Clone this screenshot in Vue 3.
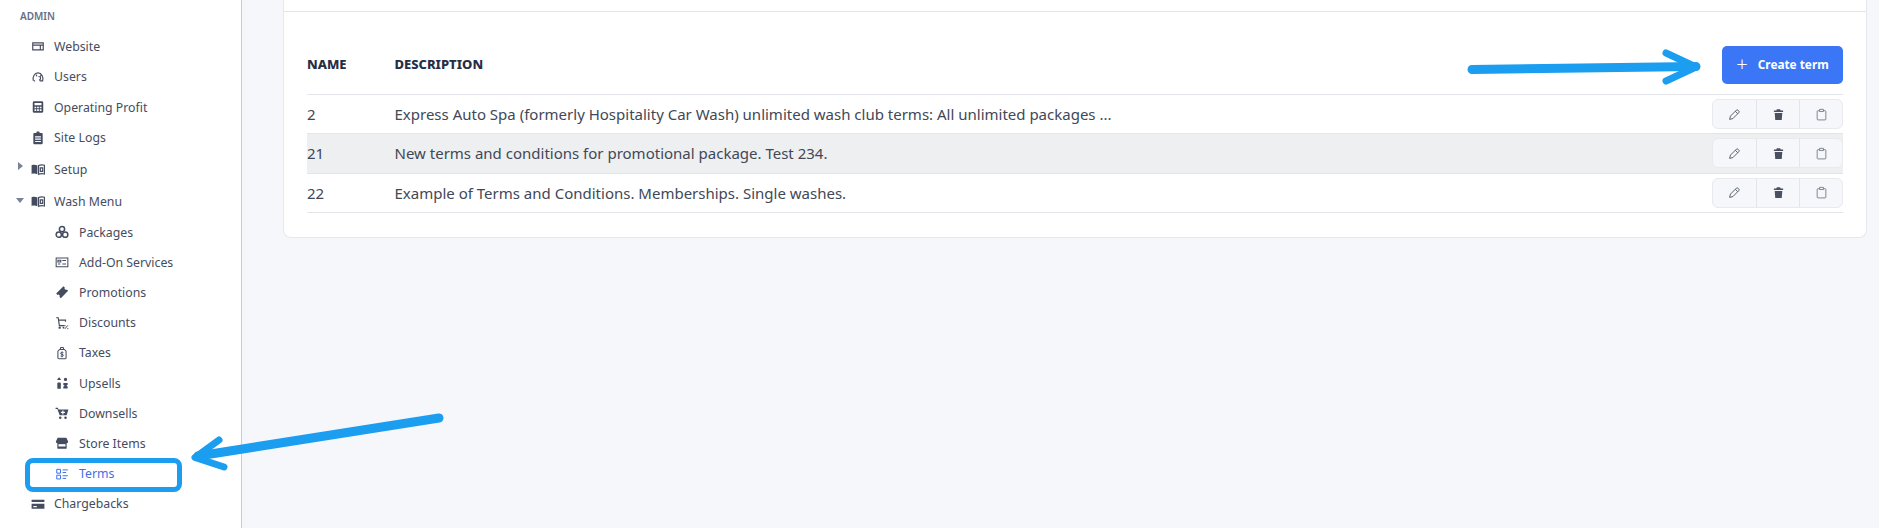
<template>
  <div class="page">
    <aside class="sidebar">
      <div class="section-title">ADMIN</div>
      <div
        v-for="item in menu"
        :key="item.label"
        class="menu-item"
        :class="{ sub: item.sub, active: item.active, parent: item.caret }"
      >
        <span v-if="!item.sub" class="caret" :class="item.caret"></span>
        <svg class="icon" viewBox="0 0 24 24" v-html="icons[item.icon]"></svg>
        <span>{{ item.label }}</span>
      </div>
    </aside>

    <main class="main">
      <section class="card">
        <div class="card-top"></div>
        <div class="card-body">
          <div class="table-head">
            <div class="col-name head">NAME</div>
            <div class="col-desc head">DESCRIPTION</div>
            <button class="create-btn"><span class="plus">+</span>Create term</button>
          </div>
          <div v-for="row in rows" :key="row.name" class="row" :class="{ hover: row.hover }">
            <div class="col-name">{{ row.name }}</div>
            <div class="col-desc">{{ row.desc }}</div>
            <div class="actions">
              <div class="action">
                <svg viewBox="0 0 24 24" fill="none" stroke="#4d5463" stroke-width="1.700" stroke-linejoin="round"><path d="M3 21l1.500-6L15.500 4a2 2 0 0 1 2.800 0l1.700 1.700a2 2 0 0 1 0 2.800L9 19.500z"/><path d="M13.500 6l4.500 4.500"/></svg>
              </div>
              <div class="action">
                <svg viewBox="0 0 24 24" fill="#4a5060"><path d="M9 2.500h6l1 2h4.500v2.700h-17V4.500H8zM5 9h14l-1 13H6z"/></svg>
              </div>
              <div class="action">
                <svg viewBox="0 0 24 24" fill="none" stroke="#5f6675" stroke-width="1.400"><path d="M8.500 5H5.500A1.500 1.500 0 0 0 4 6.500v14A1.500 1.500 0 0 0 5.500 22h13a1.500 1.500 0 0 0 1.500-1.500v-14A1.500 1.500 0 0 0 18.500 5h-3"/><path d="M8.500 2.500h7v4h-7z"/></svg>
              </div>
            </div>
          </div>
        </div>
      </section>
    </main>

    <!-- annotations drawn on top of the screenshot -->
    <div class="highlight"></div>
    <svg class="arrows" viewBox="0 0 1879 528" fill="none" stroke="#1b9df0" stroke-linecap="round" stroke-linejoin="round">
      <path d="M1472 69.500L1696 66.500" stroke-width="9"/>
      <path d="M1666 53L1696 67L1666 81" stroke-width="7"/>
      <path d="M439 418L198 456" stroke-width="9"/>
      <path d="M219 440L195 457.500L224 467" stroke-width="7"/>
    </svg>
  </div>
</template>

<script setup>
const icons = {
  website: '<path fill="none" stroke="currentColor" stroke-width="2" d="M3 6.500h18v12H3zM3 10.500h18M16 10.500v8"/>',
  users: '<path fill="none" stroke="currentColor" stroke-width="2" d="M4 18.500C2 12 6 5 12 5s10 7 8 13.500h-5M7 18.500H5M9 8l1 3M15 5.500c3 0 3 5 0 6 2 .5 2 5-1 6"/>',
  calc: '<path fill="currentColor" fill-rule="evenodd" d="M5.500 2h13A2.500 2.500 0 0 1 21 4.500v15a2.500 2.500 0 0 1-2.500 2.500h-13A2.500 2.500 0 0 1 3 19.500v-15A2.500 2.500 0 0 1 5.500 2zM6 5v4h12V5zM6 11.500v2.500h3v-2.500zM10.500 11.500v2.500h3v-2.500zM15 11.500v2.500h3v-2.500zM6 16v3h3v-3zM10.500 16v3h3v-3zM15 16v3h3v-3z"/>',
  logs: '<path fill="currentColor" fill-rule="evenodd" d="M9 3.500a3 3 0 0 1 6 0h3.500A1.500 1.500 0 0 1 20 5v16a1.500 1.500 0 0 1-1.500 1.500h-13A1.500 1.500 0 0 1 4 21V5a1.500 1.500 0 0 1 1.500-1.500zM7 9v2h10V9zM7 13v2h10v-2zM7 17v2h10v-2z"/>',
  book: '<path fill="currentColor" d="M1 5.500c3.500-1 7-.8 10 .5v15c-3-1.300-6.500-1.500-10-.5z"/><path fill="none" stroke="currentColor" stroke-width="2" d="M13 6c3-1.300 6.500-1.500 10-.5V20.500c-3.500-1-7-.8-10 .5zM16 10h4v6h-4z"/>',
  packages: '<g fill="none" stroke="currentColor" stroke-width="2.600"><circle cx="12" cy="7" r="4.500"/><circle cx="6.500" cy="16.500" r="4.500"/><circle cx="17.500" cy="16.500" r="4.500"/></g>',
  addon: '<path fill="none" stroke="currentColor" stroke-width="1.800" d="M2 5h20v15H2zM5 9h5v3H5zM5 15.500h4M12.500 9.500H19M12.500 15.500H19"/>',
  promo: '<path fill="currentColor" d="M14.500 2l2.500 2.500a2 2 0 0 0 3 3L22.500 10 10 22.500 7.500 20a2 2 0 0 0-3-3L2 14.500z"/>',
  discount: '<path fill="none" stroke="currentColor" stroke-width="2" d="M2 3h3.500l2 13.500H16M6 7h12v3"/><circle cx="8" cy="20" r="2" fill="currentColor"/><circle cx="14.500" cy="20" r="1.600" fill="currentColor"/><path fill="none" stroke="currentColor" stroke-width="1.700" d="M17 22l5-6"/><circle cx="17" cy="16.500" r="1.100" fill="currentColor"/><circle cx="22" cy="21.500" r="1.100" fill="currentColor"/>',
  taxes: '<path fill="none" stroke="currentColor" stroke-width="1.800" d="M8 6h8l3 3v11a2 2 0 0 1-2 2H7a2 2 0 0 1-2-2V9zM9 6l1-3.500h4L15 6"/><path fill="none" stroke="currentColor" stroke-width="1.600" d="M14.500 11.500c-1-1.200-5-1-5 1 0 2.500 5 1.200 5 3.500 0 2-4 2.300-5 1M12 9.500v10"/>',
  upsells: '<path fill="currentColor" d="M4 12.500A1.500 1.500 0 0 1 5.500 11h3a1.500 1.500 0 0 1 1.500 1.500V22H4zM7 2l3 3.500v1.500H4V5.500zM18 3a2.800 2.800 0 1 1 0 5.600A2.800 2.800 0 0 1 18 3zM14.500 12h7l.5 2.500-2.500 2 2.500 2-.5 3h-7l-.5-3 2.500-2-2.500-2z"/>',
  downsells: '<path fill="currentColor" fill-rule="evenodd" d="M1 3h4l1 3h17l-3 10H8L4 5H1zM12.500 7.500v2.500H10v2h2.500v2.500h2V12H17v-2h-2.500V7.500z"/><circle cx="9" cy="20" r="2.200" fill="currentColor"/><circle cx="18" cy="20" r="2.200" fill="currentColor"/>',
  store: '<path fill="currentColor" d="M4.500 3h15L22.500 9.500c0 1.800-1 3-2.500 3v8A1.500 1.500 0 0 1 18.500 22h-13A1.500 1.500 0 0 1 4 20.500v-8c-1.500 0-2.500-1.200-2.500-3z"/><path fill="#fff" d="M6 14h12v4H6z"/>',
  terms: '<path fill="none" stroke="currentColor" stroke-width="1.700" d="M3 4h6.500v6.500H3zM3 14h6.500v6.500H3zM13 5h9M13 9.500h6M13 15h9M13 19.500h6"/>',
  card: '<path fill="currentColor" d="M1 4.500h22v4H1zM1 11.500h22v8.500H1z"/><path fill="#fff" d="M4 15.500h6v2H4z"/>'
}

const menu = [
  { label: 'Website', icon: 'website' },
  { label: 'Users', icon: 'users' },
  { label: 'Operating Profit', icon: 'calc' },
  { label: 'Site Logs', icon: 'logs' },
  { label: 'Setup', icon: 'book', caret: 'right' },
  { label: 'Wash Menu', icon: 'book', caret: 'down' },
  { label: 'Packages', icon: 'packages', sub: true },
  { label: 'Add-On Services', icon: 'addon', sub: true },
  { label: 'Promotions', icon: 'promo', sub: true },
  { label: 'Discounts', icon: 'discount', sub: true },
  { label: 'Taxes', icon: 'taxes', sub: true },
  { label: 'Upsells', icon: 'upsells', sub: true },
  { label: 'Downsells', icon: 'downsells', sub: true },
  { label: 'Store Items', icon: 'store', sub: true },
  { label: 'Terms', icon: 'terms', sub: true, active: true },
  { label: 'Chargebacks', icon: 'card' }
]

const rows = [
  { name: '2', desc: 'Express Auto Spa (formerly Hospitality Car Wash) unlimited wash club terms: All unlimited packages ...' },
  { name: '21', desc: 'New terms and conditions for promotional package. Test 234.', hover: true },
  { name: '22', desc: 'Example of Terms and Conditions. Memberships. Single washes.' }
]
</script>

<style>
html,
body {
  margin: 0;
  overflow: hidden;
}
</style>

<style scoped>
.page {
  position: relative;
  display: flex;
  height: 528px;
  overflow: hidden;
  background: #f5f7fb;
  font-family: "Noto Sans", "Open Sans", sans-serif;
  color: #3f4759;
}
.sidebar {
  flex-shrink: 0;
  width: 242px;
  height: 100%;
  box-sizing: border-box;
  padding-top: 8px;
  background: #fff;
  border-right: 1px solid #c9ccd6;
}
.section-title {
  margin-left: 20px;
  margin-bottom: 7px;
  font-size: 10px;
  line-height: 16px;
  font-weight: 600;
  color: #666f88;
}
.menu-item {
  display: flex;
  align-items: center;
  height: 30.500px;
  padding-left: 17px;
  font-size: 12.300px;
  color: #454c60;
  white-space: nowrap;
}
.menu-item.parent {
  height: 32px;
}
.menu-item.sub {
  height: 30.200px;
  padding-left: 55px;
}
.caret {
  flex-shrink: 0;
  width: 14px;
  height: 0;
  position: relative;
}
.caret.right::before {
  content: "";
  position: absolute;
  left: 1px;
  top: -7px;
  border-left: 5px solid #7a8296;
  border-top: 4px solid transparent;
  border-bottom: 4px solid transparent;
}
.caret.down::before {
  content: "";
  position: absolute;
  left: -1px;
  top: -3px;
  border-top: 5px solid #7a8296;
  border-left: 4px solid transparent;
  border-right: 4px solid transparent;
}
.icon {
  flex-shrink: 0;
  width: 14px;
  height: 14px;
  margin-right: 9px;
  color: #454c60;
}
.menu-item.sub .icon {
  margin-right: 10px;
}
.menu-item.active,
.menu-item.active .icon {
  color: #3f6fe8;
}
.main {
  flex: 1;
  min-width: 0;
  padding-right: 12px;
  padding-left: 41px;
}
.card {
  height: 238px;
  box-sizing: border-box;
  background: #fff;
  border: 1px solid #e6e8ed;
  border-top: none;
  border-radius: 0 0 8px 8px;
}
.card-top {
  height: 11px;
  border-bottom: 1px solid #e3e5ea;
}
.card-body {
  padding: 0 23px;
}
.table-head {
  display: flex;
  align-items: center;
  height: 83px;
  padding-top: 23px;
  box-sizing: border-box;
  border-bottom: 1px solid #e3e5ea;
}
.col-name {
  flex-shrink: 0;
  width: 87.500px;
}
.col-desc {
  flex: 1;
  min-width: 0;
}
.head {
  margin-bottom: 2px;
  font-size: 13px;
  font-weight: 800;
  color: #262d45;
}
.create-btn {
  display: flex;
  align-items: center;
  justify-content: center;
  width: 121px;
  height: 38px;
  padding: 0 0 2px;
  border: none;
  border-radius: 5px;
  background: #3b76f6;
  color: #fff;
  font-family: inherit;
  font-size: 11.800px;
  font-weight: 700;
}
.plus {
  margin-right: 10px;
  font-size: 20px;
  font-weight: 300;
  line-height: 1;
}
.row {
  display: flex;
  align-items: center;
  height: 39.330px;
  box-sizing: border-box;
  border-bottom: 1px solid #e3e5ea;
  font-size: 15px;
  color: #414856;
}
.row.hover {
  background: #eeeff1;
}
.actions {
  display: flex;
  flex-shrink: 0;
  height: 30px;
  box-sizing: border-box;
  background: #f5f7fa;
  border: 1px solid #e8eaef;
  border-radius: 6px;
}
.action {
  display: flex;
  align-items: center;
  justify-content: center;
  box-sizing: border-box;
  width: 43px;
  border-left: 1px solid #e3e5ea;
}
.action:first-child {
  border-left: none;
}
.action svg {
  width: 13px;
  height: 13px;
}
.highlight {
  position: absolute;
  left: 25px;
  top: 458px;
  width: 157px;
  height: 34px;
  box-sizing: border-box;
  border: 5px solid #1b9df0;
  border-radius: 8px;
}
.arrows {
  position: absolute;
  inset: 0;
  width: 1879px;
  height: 528px;
  pointer-events: none;
}
</style>
